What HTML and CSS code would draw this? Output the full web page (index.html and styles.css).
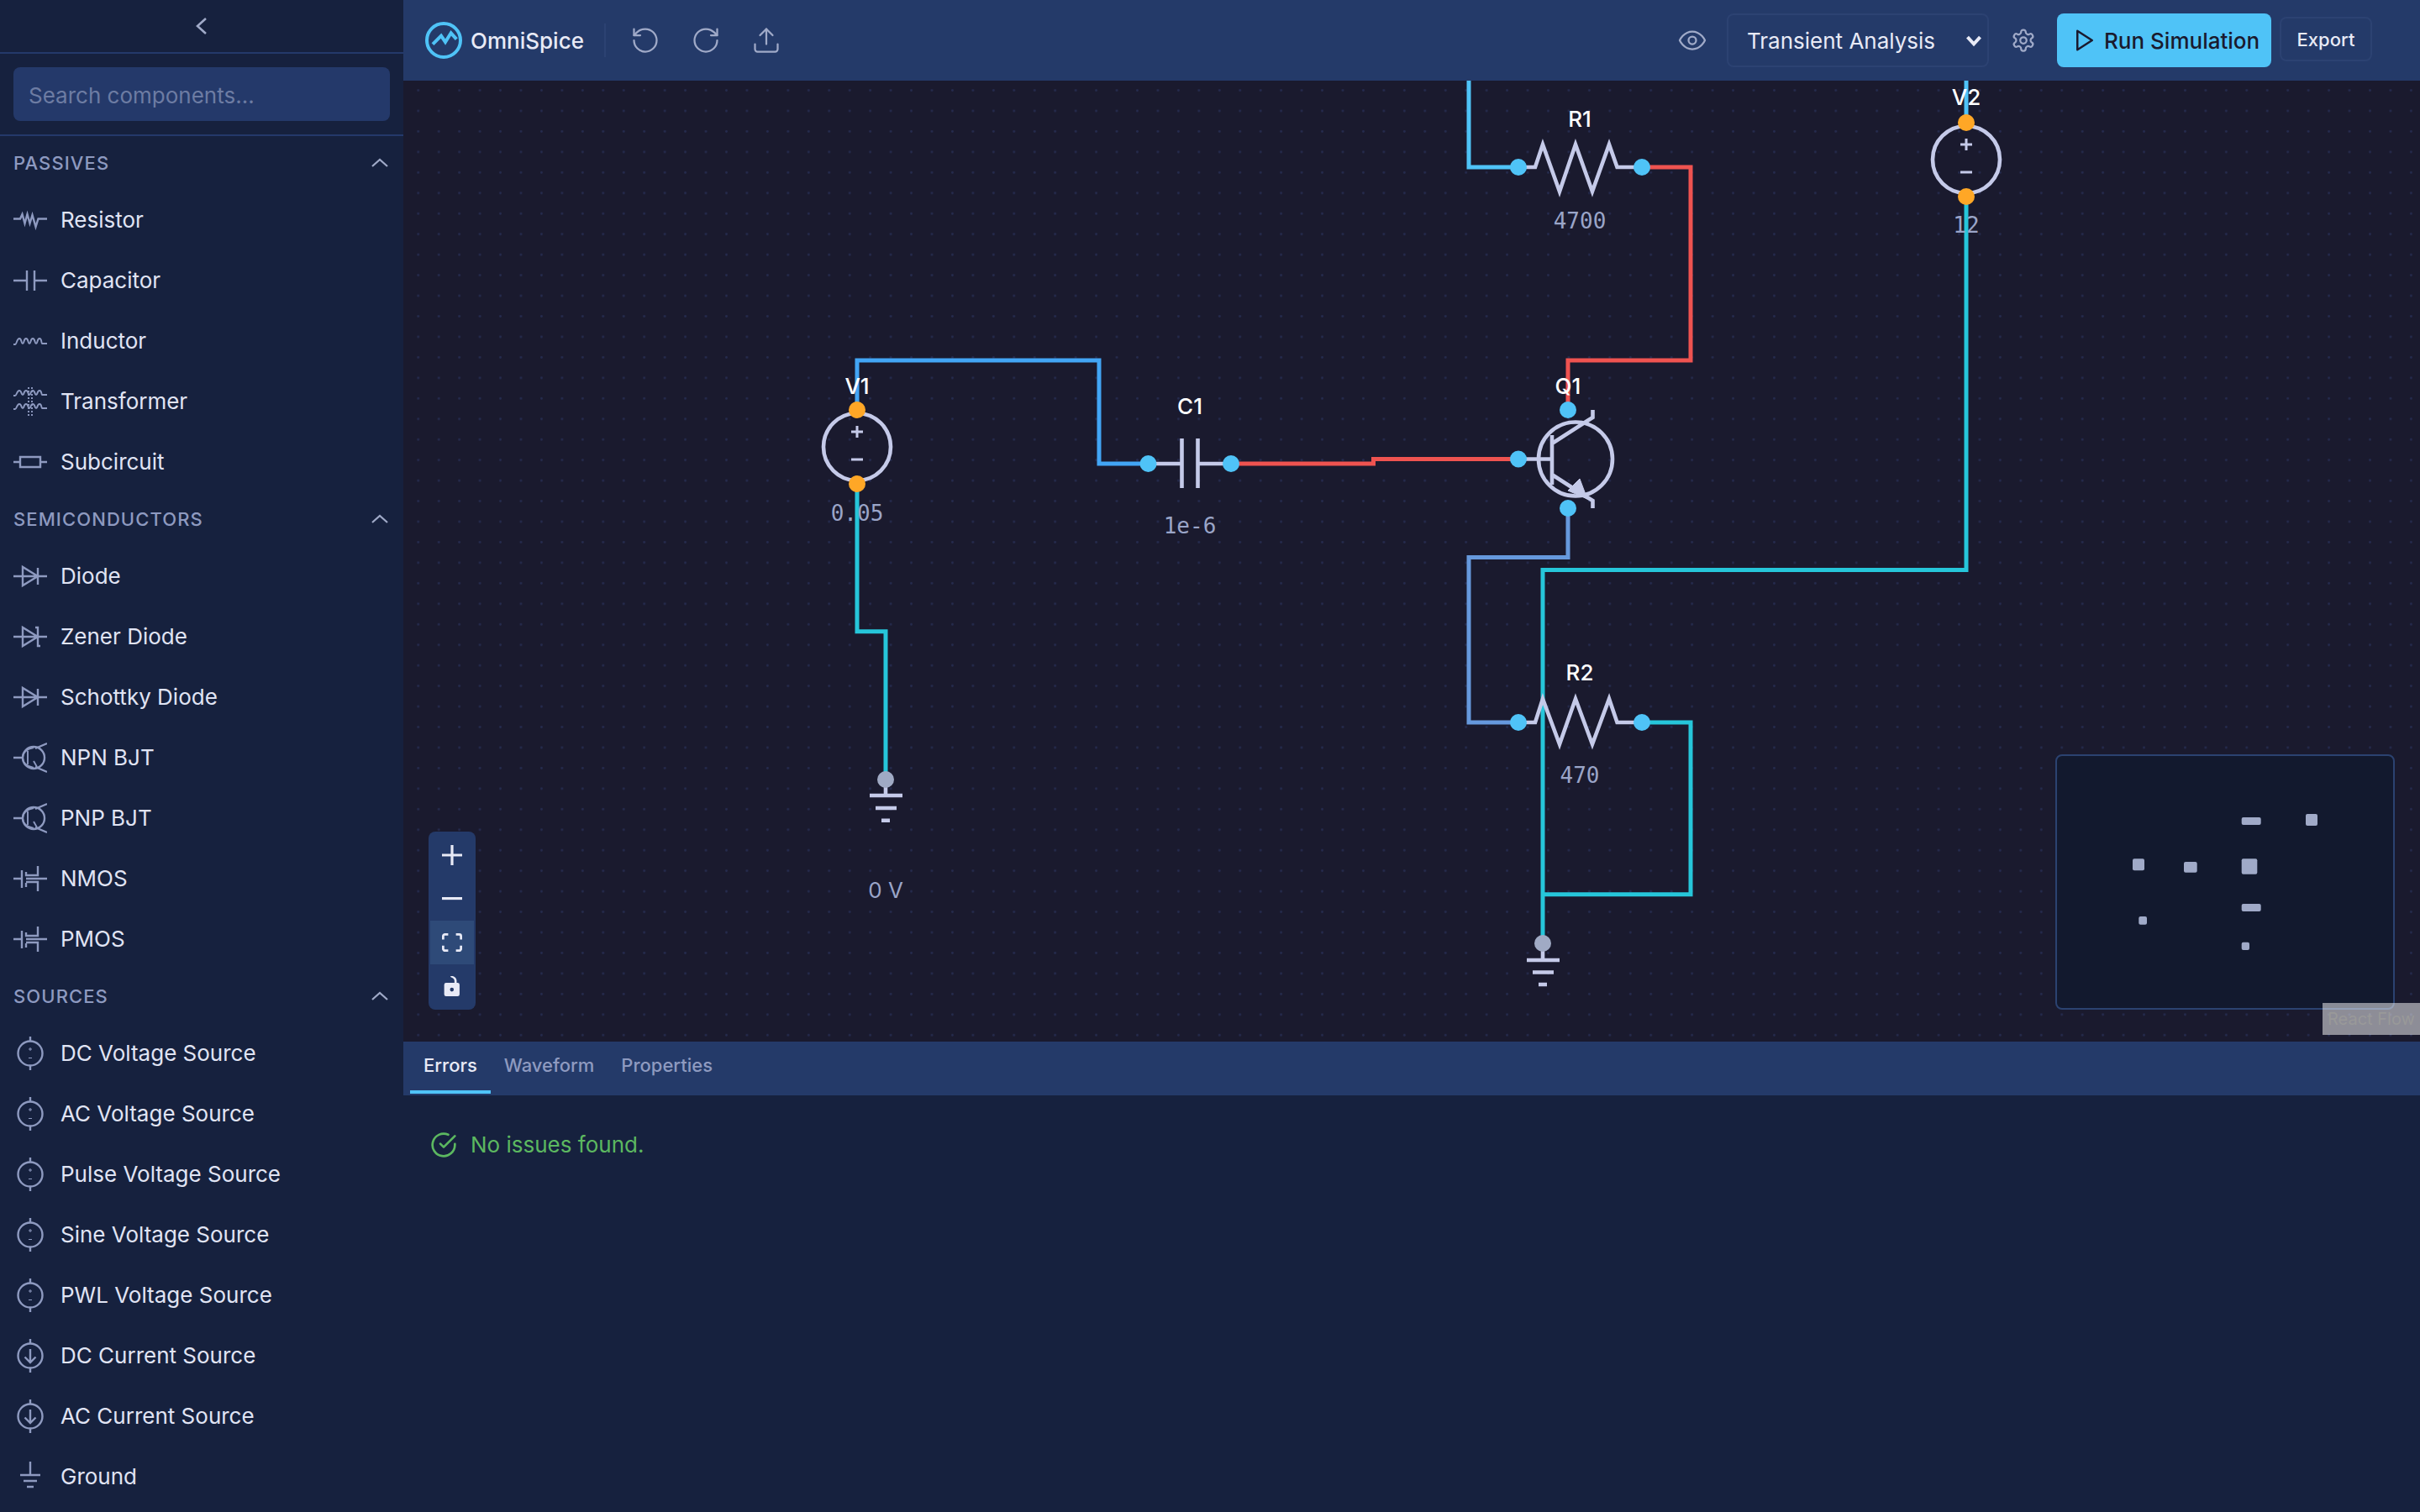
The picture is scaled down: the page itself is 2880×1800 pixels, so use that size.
FILE: index.html
```html
<!DOCTYPE html>
<html lang="en">
<head>
    <meta charset="UTF-8">
    <title>OmniSpice</title>
    <link rel="stylesheet" href="styles.css">
</head>
<body>
    <svg class="sprite" width="0" height="0">
        <symbol id="i-resistor" viewBox="0 0 40 24">
            <path d="M0 10.5H8L10.5 5 13.5 16 16.5 5 19.5 16 22.5 6 26.5 20 29.5 10.5H40" />
        </symbol>
        <symbol id="i-capacitor" viewBox="0 0 40 30">
            <path d="M0 15H16M16 3V27M25 3V27M25 15H40" />
        </symbol>
        <symbol id="i-inductor" viewBox="0 0 40 24">
            <path class="thin" d="M0 16H2C4 16 4 9 7 9S9 15 11 15 12 9 15 9 17 15 19 15 20 9 23 9 25 15 27 15 28 9 31 9 33 15 34 15H40" />
        </symbol>
        <symbol id="i-transformer" viewBox="0 0 40 36">
            <path class="thin" d="M0 11H2C4 11 4 5 7 5S9 10 11 10 12 5 15 5 17 10 19 10 20 5 23 5 25 10 27 10 28 5 31 5 33 10 34 10H40" />
            <path class="thin" d="M0 27H2C4 27 4 21 7 21S9 26 11 26 12 21 15 21 17 26 19 26 20 21 23 21 25 26 27 26 28 21 31 21 33 26 34 26H40" />
            <path class="thin" stroke-dasharray="2 2" d="M18 1V35M22 1V35" />
        </symbol>
        <symbol id="i-subcircuit" viewBox="0 0 40 24">
            <path d="M0 12H8M32 12H40M8 6H32V18H8Z" />
        </symbol>
        <symbol id="i-diode" viewBox="0 0 40 30">
            <path d="M0 15H40M11 4V26L29 15ZM29 5V25" />
        </symbol>
        <symbol id="i-zener" viewBox="0 0 40 30">
            <path d="M0 15H40M11 4V26L29 15ZM26 4H29V26H32" />
        </symbol>
        <symbol id="i-bjt" viewBox="0 0 40 36">
            <path d="M0 18H11M40 1 26 7M40 35 26 29" />
            <ellipse cx="24" cy="18" rx="13" ry="13" />
            <path class="thin" d="M24 6C14 8 11 13 11 18S14 28 24 30M17 10V26M24 22 28 29" />
        </symbol>
        <symbol id="i-mos" viewBox="0 0 40 34">
            <path d="M0 17H10M10 7V28M15 9V13H29V2M15 22V27M15 21H29V32M15 17H40" />
        </symbol>
        <symbol id="i-vsource" viewBox="0 0 40 40">
            <circle cx="20" cy="20" r="14.5" />
            <path d="M20 0V5.5M20 34.5V40" />
            <path class="fine" d="M18 15H22M20 13V17M18 25.500H22" />
        </symbol>
        <symbol id="i-isource" viewBox="0 0 40 40">
            <circle cx="20" cy="20" r="14.5" />
            <path d="M20 0V5.500M20 34.500V40M20 12V28M13.500 21.500 20 28 26.500 21.500" />
        </symbol>
        <symbol id="i-ground" viewBox="0 0 40 40">
            <path d="M20 2V18M8 18H32M12 25H28M16 32H24" />
        </symbol>
    </svg>

    <div class="app">
        <aside class="sidebar">
            <div class="sidebar-top">
                <svg class="collapse-icon" viewBox="0 0 24 24"><path d="M17 3 7 12 17 21" /></svg>
            </div>
            <div class="search-box">
                <input class="search-input" type="text" placeholder="Search components...">
            </div>

            <div class="section-head"><span>Passives</span><svg viewBox="0 0 24 24"><path d="M3 16 12 8 21 16" /></svg></div>
            <div class="item"><svg class="item-icon"><use href="#i-resistor" /></svg>Resistor</div>
            <div class="item"><svg class="item-icon"><use href="#i-capacitor" /></svg>Capacitor</div>
            <div class="item"><svg class="item-icon"><use href="#i-inductor" /></svg>Inductor</div>
            <div class="item"><svg class="item-icon"><use href="#i-transformer" /></svg>Transformer</div>
            <div class="item"><svg class="item-icon"><use href="#i-subcircuit" /></svg>Subcircuit</div>

            <div class="section-head"><span>Semiconductors</span><svg viewBox="0 0 24 24"><path d="M3 16 12 8 21 16" /></svg></div>
            <div class="item"><svg class="item-icon"><use href="#i-diode" /></svg>Diode</div>
            <div class="item"><svg class="item-icon"><use href="#i-zener" /></svg>Zener Diode</div>
            <div class="item"><svg class="item-icon"><use href="#i-diode" /></svg>Schottky Diode</div>
            <div class="item"><svg class="item-icon"><use href="#i-bjt" /></svg>NPN BJT</div>
            <div class="item"><svg class="item-icon"><use href="#i-bjt" /></svg>PNP BJT</div>
            <div class="item"><svg class="item-icon"><use href="#i-mos" /></svg>NMOS</div>
            <div class="item"><svg class="item-icon"><use href="#i-mos" /></svg>PMOS</div>

            <div class="section-head"><span>Sources</span><svg viewBox="0 0 24 24"><path d="M3 16 12 8 21 16" /></svg></div>
            <div class="item"><svg class="item-icon"><use href="#i-vsource" /></svg>DC Voltage Source</div>
            <div class="item"><svg class="item-icon"><use href="#i-vsource" /></svg>AC Voltage Source</div>
            <div class="item"><svg class="item-icon"><use href="#i-vsource" /></svg>Pulse Voltage Source</div>
            <div class="item"><svg class="item-icon"><use href="#i-vsource" /></svg>Sine Voltage Source</div>
            <div class="item"><svg class="item-icon"><use href="#i-vsource" /></svg>PWL Voltage Source</div>
            <div class="item"><svg class="item-icon"><use href="#i-isource" /></svg>DC Current Source</div>
            <div class="item"><svg class="item-icon"><use href="#i-isource" /></svg>AC Current Source</div>
            <div class="item"><svg class="item-icon"><use href="#i-ground" /></svg>Ground</div>
        </aside>

        <main class="main">
            <header class="topbar">
                <div class="brand">
                    <svg class="logo" viewBox="0 0 44 44">
                        <circle cx="22" cy="22" r="20" />
                        <path d="M9 26.700 19 16.700 24 24 30.700 13.300 37.300 20.700" />
                    </svg>
                    <span>OmniSpice</span>
                </div>
                <div class="divider"></div>
                <button class="icon-btn">
                    <svg viewBox="0 0 24 24"><path d="M3 12a9 9 0 1 0 9-9 9.750 9.750 0 0 0-6.740 2.740L3 8" /><path d="M3 3v5h5" /></svg>
                </button>
                <button class="icon-btn">
                    <svg viewBox="0 0 24 24"><path d="M21 12a9 9 0 1 1-9-9c2.520 0 4.930 1 6.740 2.740L21 8" /><path d="M21 3v5h-5" /></svg>
                </button>
                <button class="icon-btn">
                    <svg viewBox="0 0 24 24"><path d="M21 15v4a2 2 0 0 1-2 2H5a2 2 0 0 1-2-2v-4" /><path d="M17 8 12 3 7 8" /><path d="M12 3V15" /></svg>
                </button>

                <div class="actions">
                    <button class="icon-btn eye-btn">
                        <svg viewBox="0 0 24 24"><path d="M2 12s3-7 10-7 10 7 10 7-3 7-10 7-10-7-10-7Z" /><circle cx="12" cy="12" r="3" /></svg>
                    </button>
                    <div class="select-wrap">
                        <select class="analysis-select">
                            <option>Transient Analysis</option>
                        </select>
                        <svg class="select-arrow" viewBox="0 0 16 12"><path d="M2 2.500 8 9 14 2.500" /></svg>
                    </div>
                    <button class="icon-btn gear-btn">
                        <svg viewBox="0 0 24 24"><path d="M12.220 2h-.440a2 2 0 0 0-2 2v.180a2 2 0 0 1-1 1.730l-.430.250a2 2 0 0 1-2 0l-.150-.080a2 2 0 0 0-2.730.730l-.220.380a2 2 0 0 0 .730 2.730l.150.100a2 2 0 0 1 1 1.720v.510a2 2 0 0 1-1 1.740l-.150.090a2 2 0 0 0-.730 2.730l.220.380a2 2 0 0 0 2.730.730l.150-.080a2 2 0 0 1 2 0l.430.250a2 2 0 0 1 1 1.730V20a2 2 0 0 0 2 2h.440a2 2 0 0 0 2-2v-.180a2 2 0 0 1 1-1.730l.430-.250a2 2 0 0 1 2 0l.150.080a2 2 0 0 0 2.730-.730l.220-.390a2 2 0 0 0-.730-2.730l-.150-.080a2 2 0 0 1-1-1.740v-.500a2 2 0 0 1 1-1.740l.150-.090a2 2 0 0 0 .730-2.730l-.220-.380a2 2 0 0 0-2.730-.730l-.150.080a2 2 0 0 1-2 0l-.430-.250a2 2 0 0 1-1-1.730V4a2 2 0 0 0-2-2z" /><circle cx="12" cy="12" r="3" /></svg>
                    </button>
                    <button class="run-btn">
                        <svg viewBox="0 0 24 24"><path d="M5 3 19 12 5 21Z" /></svg>
                        Run Simulation
                    </button>
                    <button class="export-btn">Export</button>
                </div>
            </header>

            <section class="canvas">
                <svg class="schematic" viewBox="480 96 2400 1144">
                    <defs>
                        <pattern id="dots" patternUnits="userSpaceOnUse" x="2417.070" y="877.770" width="24.450" height="24.450">
                            <circle cx="12.230" cy="12.230" r="1.400" fill="#252b4e" />
                        </pattern>
                    </defs>
                    <rect x="480" y="96" width="2400" height="1144" fill="url(#dots)" />

                    <!-- wires -->
                    <g class="wires">
                        <path stroke="#42a5f5" d="M1020 488V429H1308V552H1367" />
                        <path stroke="#ef5350" d="M1465 552H1634.500V546.500H1807" />
                        <path stroke="#ef5350" d="M1866 488V429H2012V199H1954" />
                        <path stroke="#4fc3f7" d="M1807 199H1748V96" />
                        <path stroke="#4fc3f7" d="M2340 146V96" />
                        <path stroke="#26c6da" d="M2340 234V678.500H1836V1123" />
                        <path stroke="#26c6da" d="M1954 860H2012V1064.700H1836" />
                        <path stroke="#26c6da" d="M1020 576V751.700H1054V928" />
                        <path stroke="#6699dd" d="M1866 605V663.600H1748V860H1807" />
                    </g>

                    <!-- symbols -->
                    <g class="symbols">
                        <circle cx="1020" cy="532" r="40" />
                        <path class="sign" d="M1013 514H1027M1020 507V521M1013 547H1027" />
                        <circle cx="2340" cy="190" r="40" />
                        <path class="sign" d="M2333 172H2347M2340 165V179M2333 205H2347" />
                        <path d="M1367 552H1406.500M1406.500 522V581M1425.500 522V581M1425.500 552H1465" />
                        <path d="M1807 199H1827L1836 172 1856 228 1875 172 1895 228 1915 172 1924.500 199H1954" />
                        <path d="M1807 860H1827L1836 832 1856 886 1875 832 1895 886 1915 832 1924.500 860H1954" />
                        <circle cx="1875" cy="546.500" r="44" />
                        <path d="M1807 546.500H1847M1847 518V577M1847 528 1889 501 1895.500 497V488M1847 565 1889 592 1895.500 596V605" />
                        <path class="filled" d="M1880 570 1889 594 1866 584Z" />
                        <path d="M1054 928V947M1035 947H1074M1042 962H1067M1049 976.700H1059" />
                        <path d="M1836 1123V1143M1817 1143H1856M1824 1157.500H1849M1831 1172H1841" />
                    </g>

                    <!-- handles -->
                    <g fill="#ffa726">
                        <circle cx="1020" cy="488" r="10" /><circle cx="1020" cy="576" r="10" />
                        <circle cx="2340" cy="146" r="10" /><circle cx="2340" cy="234" r="10" />
                    </g>
                    <g fill="#4fc3f7">
                        <circle cx="1366.500" cy="552" r="10" /><circle cx="1465" cy="552" r="10" />
                        <circle cx="1807" cy="199" r="10" /><circle cx="1954" cy="199" r="10" />
                        <circle cx="1807" cy="860" r="10" /><circle cx="1954" cy="860" r="10" />
                        <circle cx="1807" cy="546.500" r="10" /><circle cx="1866" cy="488" r="10" /><circle cx="1866" cy="605" r="10" />
                    </g>
                    <g fill="#a0aac4">
                        <circle cx="1054" cy="928" r="10" /><circle cx="1836" cy="1123" r="10" />
                    </g>

                    <!-- labels -->
                    <g class="node-name">
                        <text x="1020" y="469">V1</text>
                        <text x="2340" y="125">V2</text>
                        <text x="1416" y="493">C1</text>
                        <text x="1866" y="469">Q1</text>
                        <text x="1880" y="151">R1</text>
                        <text x="1880" y="810">R2</text>
                    </g>
                    <g class="node-value">
                        <text x="1020" y="620">0.05</text>
                        <text x="2340" y="277">12</text>
                        <text x="1416" y="635">1e-6</text>
                        <text x="1880" y="272">4700</text>
                        <text x="1880" y="932">470</text>
                    </g>
                    <text class="node-volt" x="1054" y="1069">0 V</text>
                </svg>

                <div class="flow-controls">
                    <button class="flow-btn"><svg viewBox="0 0 32 32"><path d="M32 18.133H18.133V32h-4.266V18.133H0v-4.266h13.867V0h4.266v13.867H32z" /></svg></button>
                    <button class="flow-btn"><svg viewBox="0 0 32 5"><path d="M0 0h32v4.200H0z" /></svg></button>
                    <button class="flow-btn is-hover"><svg viewBox="0 0 32 30"><path d="M3.692 4.630c0-.530.400-.938.939-.938h5.215V0H4.708C2.130 0 0 2.054 0 4.630v5.216h3.692V4.631zM27.354 0h-5.200v3.692h5.170c.530 0 .984.400.984.939v5.215H32V4.631A4.624 4.624 0 0027.354 0zm.954 24.830c0 .532-.400.940-.939.940h-5.215v3.768h5.215c2.577 0 4.631-2.130 4.631-4.707v-5.139h-3.692v5.139zm-23.677.940c-.531 0-.939-.400-.939-.940v-5.138H0v5.139c0 2.577 2.130 4.707 4.708 4.707h5.138V25.770H4.631z" /></svg></button>
                    <button class="flow-btn"><svg viewBox="0 0 25 32"><path d="M21.333 10.667H19.810V7.619C19.810 3.429 16.380 0 12.190 0c-4.114 0-1.828 1.370-.305 2.438 1.676.305 4.420 2.590 4.420 5.181v3.048H3.047A3.056 3.056 0 000 13.714v15.238A3.056 3.056 0 003.048 32h18.285a3.056 3.056 0 003.048-3.048V13.714a3.056 3.056 0 00-3.048-3.047zM12.190 24.533a3.056 3.056 0 01-3.047-3.047 3.056 3.056 0 013.047-3.048 3.056 3.056 0 013.048 3.048 3.056 3.056 0 01-3.048 3.047z" /></svg></button>
                </div>

                <div class="minimap">
                    <svg viewBox="2448 900 400 300">
                        <rect x="2667.700" y="973" width="23" height="9" rx="2" />
                        <rect x="2744" y="969" width="14" height="14" rx="2" />
                        <rect x="2538" y="1022.300" width="14" height="14" rx="2" />
                        <rect x="2599" y="1026" width="15.700" height="12.700" rx="2" />
                        <rect x="2667.700" y="1022.300" width="18.600" height="18.400" rx="2" />
                        <rect x="2667.700" y="1076" width="23" height="9" rx="2" />
                        <rect x="2545.300" y="1091" width="9.700" height="9.700" rx="2" />
                        <rect x="2667.700" y="1121.700" width="9.300" height="9.300" rx="2" />
                    </svg>
                </div>
                <div class="attribution">React Flow</div>
            </section>

            <section class="panel">
                <nav class="tabs">
                    <button class="tab active">Errors</button>
                    <button class="tab">Waveform</button>
                    <button class="tab">Properties</button>
                </nav>
                <div class="panel-body">
                    <svg class="ok-icon" viewBox="0 0 24 24"><path d="M22 11.080V12a10 10 0 1 1-5.930-9.140" /><path d="M22 4 12 14.010 9 11.010" /></svg>
                    No issues found.
                </div>
            </section>
        </main>
    </div>
</body>
</html>
```

FILE: styles.css
```css
* {
    box-sizing: border-box;
}

body {
    margin: 0;
    font-family: Inter, "Noto Sans", sans-serif;
    background-color: #16213e;
    color: #e8eaf6;
}

button {
    font-family: inherit;
    cursor: pointer;
}

.sprite {
    position: absolute;
}

.sprite path,
.sprite circle,
.sprite ellipse {
    fill: none;
    stroke: #8e9ac0;
    stroke-width: 2.4;
}

.sprite .thin {
    stroke-width: 1.9;
}

.sprite .fine {
    stroke-width: 1;
}

.app {
    display: flex;
    width: 2880px;
    height: 1800px;
    overflow: hidden;
}

/* sidebar */
.sidebar {
    width: 480px;
    flex-shrink: 0;
    height: 100%;
    overflow: hidden;
    background-color: #16213e;
}

.sidebar-top {
    height: 64px;
    display: flex;
    align-items: center;
    justify-content: center;
    border-bottom: 2px solid #24396a;
}

.collapse-icon {
    width: 24px;
    height: 24px;
    fill: none;
    stroke: #a0aac8;
    stroke-width: 2.6;
}

.search-box {
    padding: 16px;
    height: 98px;
    border-bottom: 2px solid #24396a;
}

.search-input {
    display: block;
    width: 100%;
    height: 64px;
    padding: 2px 18px 0;
    font-family: inherit;
    font-size: 26px;
    color: #e8eaf6;
    background-color: #24396a;
    border: none;
    border-radius: 8px;
}

.search-input::placeholder {
    color: #6d7ca3;
    opacity: 1;
}

.section-head {
    height: 64px;
    padding: 0 16px;
    display: flex;
    align-items: center;
    justify-content: space-between;
    font-size: 22px;
    font-weight: 500;
    letter-spacing: 1.1px;
    text-transform: uppercase;
    color: #8e9ac0;
}

.section-head svg {
    width: 24px;
    height: 24px;
    fill: none;
    stroke: #a0aac8;
    stroke-width: 2.2;
}

.item {
    height: 72px;
    padding: 0 16px 2px;
    display: flex;
    align-items: center;
    gap: 16px;
    font-size: 26px;
    color: #e0e4f4;
}

.item-icon {
    width: 40px;
    height: 40px;
    margin-top: 2px;
    flex-shrink: 0;
}

/* top bar */
.main {
    flex: 1;
    min-width: 0;
    display: flex;
    flex-direction: column;
}

.topbar {
    height: 96px;
    flex-shrink: 0;
    display: flex;
    align-items: center;
    padding: 0 57px 0 26px;
    background-color: #243a69;
}

.brand {
    display: flex;
    align-items: center;
    gap: 10px;
    font-size: 26px;
    font-weight: 500;
}

.logo {
    width: 44px;
    height: 44px;
    fill: none;
    stroke: #4fc3f7;
    stroke-width: 4;
}

.divider {
    width: 2px;
    height: 40px;
    margin: 0 11px 0 24px;
    background-color: #2c4272;
}

.icon-btn {
    width: 72px;
    height: 64px;
    padding: 0;
    display: flex;
    align-items: center;
    justify-content: center;
    background: none;
    border: none;
}

.icon-btn svg {
    width: 36px;
    height: 36px;
    fill: none;
    stroke: #a0aac8;
    stroke-width: 1.5;
    stroke-linecap: round;
    stroke-linejoin: round;
}

.actions {
    margin-left: auto;
    display: flex;
    align-items: center;
}

.eye-btn {
    margin-right: 5px;
}

.gear-btn {
    margin-left: 5px;
    margin-right: 4px;
}

.gear-btn svg {
    width: 30px;
    height: 30px;
    stroke-width: 1.8;
}

.select-wrap {
    position: relative;
    width: 312px;
    height: 64px;
}

.analysis-select {
    width: 100%;
    height: 100%;
    padding: 0 40px 0 22px;
    font-family: inherit;
    font-size: 26px;
    color: #e8eaf6;
    background-color: #243a69;
    border: 2px solid #2c4272;
    border-radius: 8px;
    appearance: none;
}

.select-arrow {
    position: absolute;
    right: 8px;
    top: 25px;
    width: 20px;
    height: 15px;
    fill: none;
    stroke: #e8eaf6;
    stroke-width: 3.2;
}

.run-btn {
    width: 255px;
    height: 64px;
    padding: 0 0 0 18px;
    display: flex;
    align-items: center;
    gap: 8px;
    font-size: 26px;
    font-weight: 500;
    color: #1a1a2e;
    background-color: #4fc3f7;
    border: none;
    border-radius: 8px;
}

.run-btn svg {
    width: 30px;
    height: 30px;
    fill: none;
    stroke: #1a1a2e;
    stroke-width: 2;
    stroke-linejoin: round;
}

.export-btn {
    width: 110px;
    height: 53px;
    margin-left: 10px;
    margin-top: -3px;
    padding: 0;
    font-size: 22px;
    font-weight: 500;
    color: #e8eaf6;
    background: none;
    border: 2px solid #2c4272;
    border-radius: 8px;
}

/* canvas */
.canvas {
    position: relative;
    flex: 1;
    min-height: 0;
    overflow: hidden;
    background-color: #1a1a2e;
}

.schematic {
    display: block;
    width: 2400px;
    height: 1144px;
}

.wires path {
    fill: none;
    stroke-width: 5;
}

.symbols circle,
.symbols path {
    fill: none;
    stroke: #c5cae9;
    stroke-width: 4.6;
}

.symbols .sign {
    stroke-width: 3;
}

.symbols .filled {
    fill: #c5cae9;
    stroke-width: 1;
}

.node-name text {
    font-size: 26px;
    font-weight: 500;
    fill: #fff;
    text-anchor: middle;
}

.node-value text {
    font-family: "DejaVu Sans Mono", monospace;
    font-size: 26px;
    fill: #9aa5c8;
    text-anchor: middle;
}

.node-volt {
    font-size: 26px;
    fill: #9aa5c8;
    text-anchor: middle;
}

.flow-controls {
    position: absolute;
    left: 30px;
    bottom: 38px;
    width: 56px;
    padding: 2px;
    background-color: #243a69;
    border-radius: 8px;
}

.flow-btn {
    width: 52px;
    height: 52px;
    padding: 0;
    display: flex;
    align-items: center;
    justify-content: center;
    background: none;
    border: none;
}

.flow-btn.is-hover {
    background-color: #2e4a78;
}

.flow-btn svg {
    width: 24px;
    max-height: 24px;
    fill: #e8eaf6;
}

.minimap {
    position: absolute;
    right: 30px;
    bottom: 38px;
    width: 404px;
    height: 304px;
    background-color: #12192e;
    border: 2px solid #2b4270;
    border-radius: 8px;
}

.minimap svg {
    display: block;
    width: 400px;
    height: 300px;
    fill: #a0aac8;
}

.attribution {
    position: absolute;
    right: 0;
    bottom: 8px;
    width: 116px;
    height: 38px;
    padding-left: 6px;
    display: flex;
    align-items: center;
    font-size: 20px;
    color: #999;
    background-color: rgba(255, 255, 255, 0.5);
}

/* bottom panel */
.panel {
    height: 560px;
    flex-shrink: 0;
    background-color: #16213e;
}

.tabs {
    height: 64px;
    padding-left: 8px;
    display: flex;
    background-color: #243a69;
}

.tab {
    height: 62px;
    padding: 0 16px 2px;
    font-size: 22px;
    font-weight: 500;
    color: #8e9ac0;
    background: none;
    border: none;
    border-bottom: 4px solid transparent;
}

.tab.active {
    color: #e8eaf6;
    border-bottom-color: #4fc3f7;
}

.panel-body {
    padding: 43px 32px;
    display: flex;
    align-items: center;
    gap: 16px;
    font-size: 26px;
    line-height: 32px;
    color: #5cb860;
}

.ok-icon {
    width: 32px;
    height: 32px;
    fill: none;
    stroke: #5cb860;
    stroke-width: 2;
    stroke-linecap: round;
    stroke-linejoin: round;
}
```
